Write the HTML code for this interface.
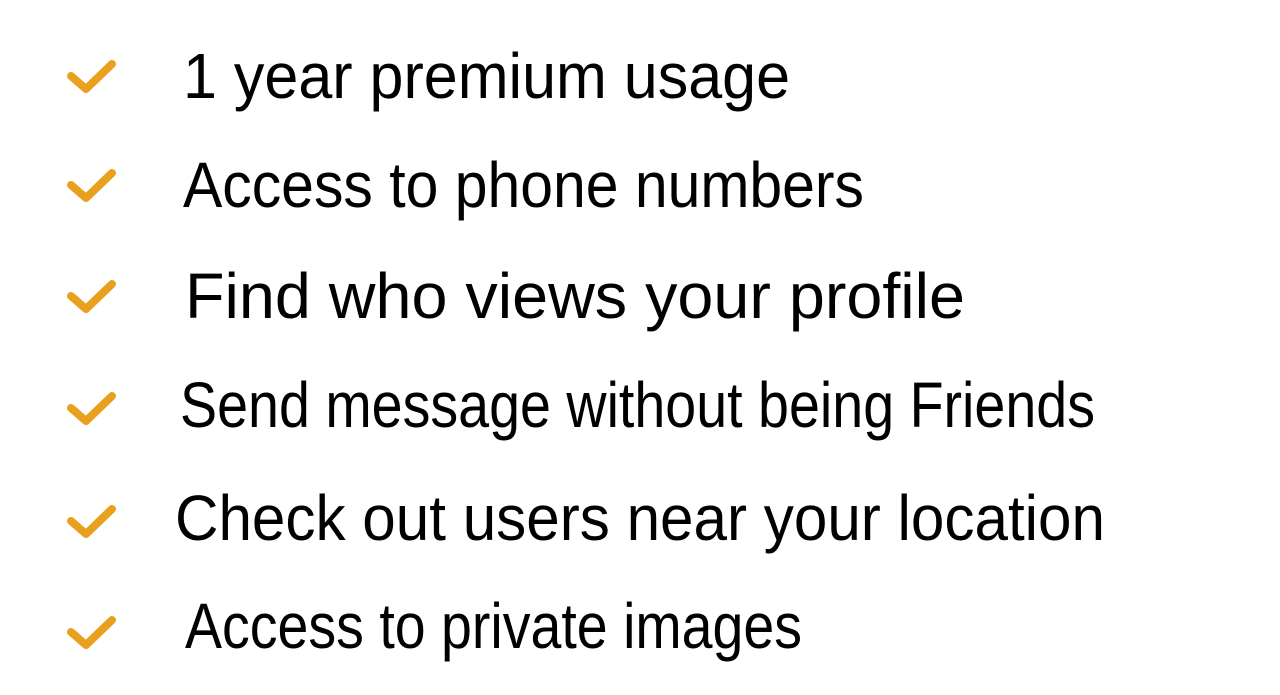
<!DOCTYPE html>
<html><head><style>
html,body{margin:0;padding:0;background:#fff;width:1280px;height:695px;overflow:hidden}
</style></head><body>
<svg width="1280" height="695" viewBox="0 0 1280 695" xmlns="http://www.w3.org/2000/svg">
<rect width="1280" height="695" fill="#fff"/>
<g fill="none" stroke="#e9a01f" stroke-width="8" stroke-linecap="round" stroke-linejoin="round">
<path d="M71 76 L86 89 L112 64"/>
<path d="M71 185 L86 198 L112 173"/>
<path d="M71 296 L86 309 L112 284"/>
<path d="M71 408 L86 421 L112 396"/>
<path d="M71 521 L86 534 L112 509"/>
<path d="M71 632 L86 645 L112 620"/>
</g>
<g font-family="Liberation Sans, sans-serif" font-size="64" fill="#000">
<text x="183" y="98" textLength="607" lengthAdjust="spacingAndGlyphs">1 year premium usage</text>
<text x="183" y="207" textLength="681" lengthAdjust="spacingAndGlyphs">Access to phone numbers</text>
<text x="185" y="318" textLength="780" lengthAdjust="spacingAndGlyphs">Find who views your profile</text>
<text x="180" y="427" textLength="915" lengthAdjust="spacingAndGlyphs">Send message without being Friends</text>
<text x="175" y="540" textLength="930" lengthAdjust="spacingAndGlyphs">Check out users near your location</text>
<text x="185" y="648" textLength="617" lengthAdjust="spacingAndGlyphs">Access to private images</text>
</g>
</svg>
</body></html>
